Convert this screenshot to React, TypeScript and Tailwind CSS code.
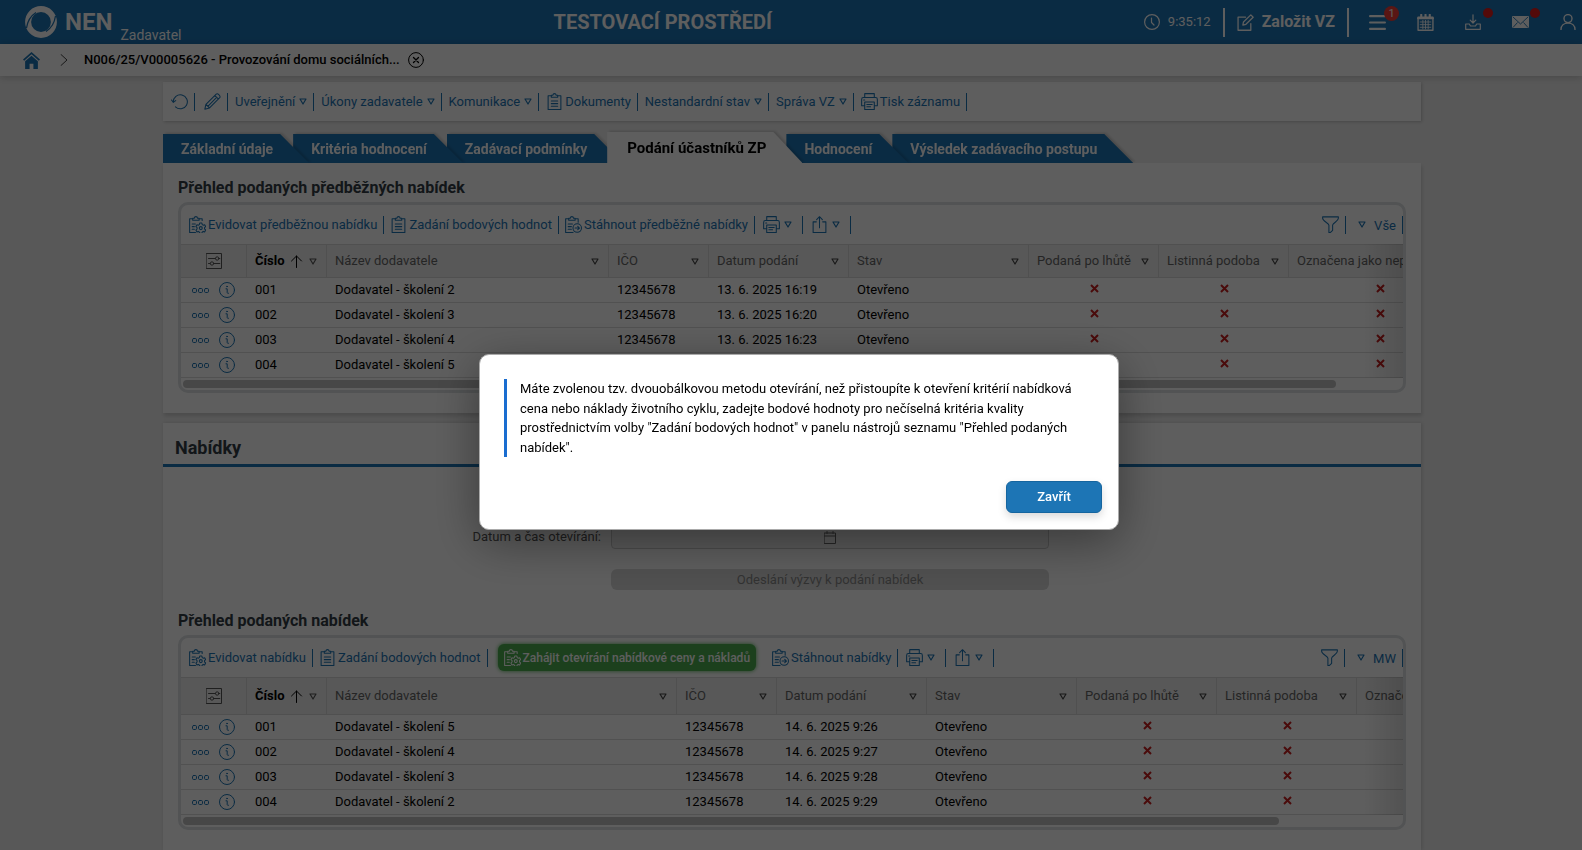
import { ReactNode, useState } from "react"

type IconProps = { className?: string }

const Svg = ({ className = "size-4", children, viewBox = "0 0 16 16" }: IconProps & { children: ReactNode, viewBox?: string }) => (
    <svg className={`${className} shrink-0`} viewBox={viewBox} fill="none" stroke="currentColor" strokeWidth="1" strokeLinecap="round" strokeLinejoin="round" aria-hidden="true">
        {children}
    </svg>
)

const Triangle = ({ className = "w-2 h-[7px]" }: IconProps) => (
    <Svg className={className} viewBox="0 0 8 7">
        <path d="M1 1h6L4 6z" strokeWidth="1.2" />
    </Svg>
)

const LogoIcon = () => (
    <svg className="size-8 shrink-0" viewBox="0 0 32 32" fill="none" aria-hidden="true">
        <circle cx="16" cy="16" r="12.900" stroke="currentColor" strokeWidth="6" />
        <path d="M1.500 22C2.500 15 5.500 10 11 6.500" stroke="#1d75b5" strokeWidth="1.300" />
        <path d="M30.500 10C29.500 17 26.500 22 21 25.500" stroke="#1d75b5" strokeWidth="1.300" />
    </svg>
)

const ClockIcon = () => (
    <Svg>
        <circle cx="8" cy="8" r="7.400" strokeWidth="1.200" />
        <path d="M7.500 4v4.500L10 11" strokeWidth="1.200" />
    </Svg>
)

const ComposeIcon = () => (
    <Svg className="size-[17px]">
        <path d="M8 3H1v12.300h12V9M5.500 10.500l.6-3L13 .8l2.200 2.200-6.800 6.700z" strokeWidth="1.200" />
    </Svg>
)

const MenuIcon = () => (
    <Svg className="size-[17px]">
        <path d="M1 2h14M1 8h14M1 14h14" strokeWidth="2" />
    </Svg>
)

const CalendarIcon = () => (
    <Svg className="size-[17px]">
        <path d="M1 3h14v12.300H1z" strokeWidth="1.300" />
        <path d="M1 4h14M4 .8v3M12 .8v3M8 .8v3" strokeWidth="2" />
        <path d="M3 7.500h10M3 10h10M3 12.500h10M5.500 6v8M8 6v8M10.500 6v8" strokeWidth=".8" />
    </Svg>
)

const DownloadIcon = () => (
    <Svg>
        <path d="M8 .8v8M5.200 6.200L8 9l2.800-2.800M.7 10v5.300h14.600V10h-3.600l-1.200 2h-5l-1.200-2z" strokeWidth="1.200" />
    </Svg>
)

const MailIcon = () => (
    <svg className="w-[17px] h-3 shrink-0" viewBox="0 0 17 12" aria-hidden="true">
        <rect width="17" height="12" rx="1" fill="currentColor" />
        <path d="M1 1l7.500 7L16 1M1 11.500l4.500-5M16 11.500l-4.500-5" fill="none" stroke="#1d75b5" strokeWidth=".9" />
    </svg>
)

const UserIcon = () => (
    <Svg>
        <circle cx="8" cy="4.600" r="4" strokeWidth="1.400" />
        <path d="M1 15.600c0-4 3-6.500 7-6.500s7 2.500 7 6.500" strokeWidth="1.400" />
    </Svg>
)

const HomeIcon = () => (
    <svg className="size-[17px] shrink-0" viewBox="0 0 16 16" fill="currentColor" aria-hidden="true">
        <path d="M8 0l8 7-1.100 1.300L8 2.200 1.100 8.300 0 7z" />
        <path d="M8 3.500l6 5.200V16H9.800v-5H6.200v5H2V8.700z" />
    </svg>
)

const RefreshIcon = () => (
    <Svg className="size-[17px]">
        <path d="M2.200 8.500A6.600 6.600 0 1 1 4.200 13M.5 6.600l1.700 2.200 2.200-1.600" />
    </Svg>
)

const PencilIcon = () => (
    <Svg className="size-[17px]">
        <path d="M.8 15.200l1-4.400L11.500 1.100c1.400-1.200 4.500 1.700 3.300 3.300L5.200 14.100zM1.800 10.800l3.400 3.300M10.300 2.400l3.300 3.300M3.600 12.500l7.600-7.600" />
    </Svg>
)

const ClipboardIcon = () => (
    <Svg className="size-[17px]">
        <path d="M5 2.500H2v13h12v-13h-3M5 4V2.200h1.400C6.600 1 7.200.6 8 .6s1.400.4 1.600 1.600H11V4zM5 7.500h6M5 10h6M5 12.500h6" />
    </Svg>
)

const ClipboardGearIcon = () => (
    <Svg className="size-[17px]">
        <path d="M3.500 2.500H.6v13h5.500M9.500 2.500h2.900v1.800M3.500 4V2.200h1.400C5.100 1 5.700.6 6.500.6s1.400.4 1.600 1.600h1.400V4zM3 7.500h3M3 10h2M3 12.500h2" />
        <path d="M10.100 6.600h2l.4 1.500 1 .6 1.200-.500 1 1.800-1.100 1v1.200l1.100 1-1 1.800-1.200-.500-1 .6-.4 1.200h-2l-.4-1.200-1-.6-1.200.5-1-1.800 1.100-1v-1.200l-1.100-1 1-1.800 1.200.5 1-.6z" />
        <circle cx="11.100" cy="11.400" r="1.400" />
    </Svg>
)

const ClipboardArrowIcon = () => (
    <Svg className="size-[17px]">
        <path d="M3.500 2.500H.6v13h7M9.500 2.500h2.900v3.300M3.500 4V2.200h1.400C5.100 1 5.700.6 6.500.6s1.400.4 1.600 1.600h1.400V4zM3 7.500h4M3 10h3M3 12.500h3" />
        <circle cx="11.500" cy="11.300" r="4" />
        <path d="M9.500 11.300h4M12 9.700l1.600 1.600L12 12.900" />
    </Svg>
)

const PrinterIcon = () => (
    <Svg className="size-[17px]">
        <path d="M3.500 4V.6h9V4M3.500 12H.6V6c0-1 .6-1.800 1.600-1.800h11.600c1 0 1.600.8 1.600 1.800v6h-2.900M2.500 6.500h1M3.500 8.500h9v7h-9zM5.500 10.800h5M5.500 13h3.500" />
    </Svg>
)

const ShareIcon = () => (
    <Svg className="size-[17px]">
        <path d="M5 5.500H2v10h12v-10h-3M8 11V.8M5.300 3.400L8 .7l2.700 2.700" />
    </Svg>
)

const FilterIcon = () => (
    <Svg className="size-[17px]">
        <path d="M.6.8h14.800v1.400c0 3-5 4-5.400 6.300v5l-2 2H6.500v-7C6 6.200.6 5.200.6 2.200z" />
    </Svg>
)

const SettingsIcon = () => (
    <Svg>
        <path d="M.5.500h15v15H.5zM2.500 5.500h7M13 5.500h.8M2.500 10.500H4M8 10.500h5.800" />
        <circle cx="11.200" cy="5.500" r="1.700" />
        <circle cx="6" cy="10.500" r="1.700" />
    </Svg>
)

const SortIcon = () => (
    <Svg className="w-3 h-[13px]" viewBox="0 0 12 13">
        <path d="M5.500 12.500V1M.5 6l5-5 5 5" />
    </Svg>
)

const DotsIcon = () => (
    <Svg className="w-[17px] h-[5px]" viewBox="0 0 17 5">
        <rect x=".5" y=".5" width="4" height="4" rx="1.200" />
        <rect x="6.500" y=".5" width="4" height="4" rx="1.200" />
        <rect x="12.500" y=".5" width="4" height="4" rx="1.200" />
    </Svg>
)

const InfoIcon = () => (
    <Svg>
        <circle cx="8" cy="8" r="7.500" />
        <path d="M7 6.800h1.200v3.700c0 .7.4 1 1.300.8" />
        <circle cx="8" cy="4.500" r=".4" />
    </Svg>
)

const CrossIcon = () => (
    <svg className="inline-block size-[9px] -translate-y-0.5" viewBox="0 0 9 9" role="img" aria-label="Ne">
        <path d="M1 1l7 7M8 1L1 8" stroke="#c81e1e" strokeWidth="2" />
    </svg>
)

type ToolProps = {
    icon?: ReactNode
    label?: string
    title?: string
    menu?: boolean
}

const Tool = ({ icon, label, title, menu }: ToolProps) => (
    <div className="flex items-center">
        <button type="button" aria-label={title} className={`flex items-center whitespace-nowrap cursor-pointer ${icon && label ? "gap-0.5" : "gap-1"} ${label ? "px-1.5" : menu ? "pl-2 pr-2.5" : "pl-2 pr-1.5"}`}>
            {icon}
            {label && <span>{label}</span>}
            {menu && <Triangle />}
        </button>
        <span className="w-px h-[18px] bg-[#1d75b5]" />
    </div>
)

const tabs = [
    "Základní údaje",
    "Kritéria hodnocení",
    "Zadávací podmínky",
    "Podání účastníků ZP",
    "Hodnocení",
    "Výsledek zadávacího postupu",
]

const tabLayers = ["z-5", "z-4", "z-3", "z-6", "z-2", "z-1"]

type Bid = {
    id: string
    supplier: string
    ico: string
    date: string
    state: string
}

const preliminaryBids: Bid[] = [
    { id: "001", supplier: "Dodavatel - školení 2", ico: "12345678", date: "13. 6. 2025 16:19", state: "Otevřeno" },
    { id: "002", supplier: "Dodavatel - školení 3", ico: "12345678", date: "13. 6. 2025 16:20", state: "Otevřeno" },
    { id: "003", supplier: "Dodavatel - školení 4", ico: "12345678", date: "13. 6. 2025 16:23", state: "Otevřeno" },
    { id: "004", supplier: "Dodavatel - školení 5", ico: "12345678", date: "13. 6. 2025 16:24", state: "Otevřeno" },
]

const bids: Bid[] = [
    { id: "001", supplier: "Dodavatel - školení 5", ico: "12345678", date: "14. 6. 2025 9:26", state: "Otevřeno" },
    { id: "002", supplier: "Dodavatel - školení 4", ico: "12345678", date: "14. 6. 2025 9:27", state: "Otevřeno" },
    { id: "003", supplier: "Dodavatel - školení 3", ico: "12345678", date: "14. 6. 2025 9:28", state: "Otevřeno" },
    { id: "004", supplier: "Dodavatel - školení 2", ico: "12345678", date: "14. 6. 2025 9:29", state: "Otevřeno" },
]

const columns = ["Název dodavatele", "IČO", "Datum podání", "Stav", "Podaná po lhůtě", "Listinná podoba", "Označena jako neplatná"]

type BidGridProps = {
    rows: Bid[]
    widths: number[]
    headClass: string
    tools: ReactNode
    view: string
}

const BidGrid = ({ rows, widths, headClass, tools, view }: BidGridProps) => {
    const total = widths.reduce((sum, width) => sum + width, 0)

    return (
        <div className="overflow-hidden rounded-[10px] border-3 border-[#dde1e3]">
            <div className="flex items-center h-[39px] pl-0.5 text-[#1d75b5]">
                {tools}
                <div className="flex items-center ml-auto">
                    <Tool icon={<FilterIcon />} title="Filtr" />
                    <button type="button" className="flex items-center gap-2 pl-3 pr-1.5 cursor-pointer">
                        <Triangle />
                        <span className="pt-0.5">{view}</span>
                    </button>
                    <span className="w-px h-[18px] bg-[#1d75b5]" />
                </div>
            </div>
            <div className="relative overflow-hidden">
                <table className="table-fixed border-separate border-spacing-0" style={{ width: total }}>
                    <colgroup>
                        {widths.map((width, i) => <col key={i} style={{ width }} />)}
                    </colgroup>
                    <thead>
                        <tr className={`${headClass} bg-[#efefef] text-[#666] *:border-y *:border-r *:border-[#d8d8d8]`}>
                            <th>
                                <button type="button" aria-label="Nastavení sloupců" className="block mx-auto text-[#555] cursor-pointer">
                                    <SettingsIcon />
                                </button>
                            </th>
                            <th className="pl-2 pr-[9px] text-left font-bold text-black">
                                <span className="flex items-center justify-between">
                                    Číslo
                                    <SortIcon />
                                    <Triangle className="w-2 h-[7px] text-[#555]" />
                                </span>
                            </th>
                            {columns.map(column => (
                                <th key={column} className="pl-2 pr-[9px] text-left font-normal whitespace-nowrap overflow-hidden">
                                    <span className="flex items-center justify-between">
                                        {column}
                                        <Triangle className="w-2 h-[7px] text-[#444]" />
                                    </span>
                                </th>
                            ))}
                        </tr>
                    </thead>
                    <tbody>
                        {rows.map(row => (
                            <tr key={row.id} className="h-[25px] text-black whitespace-nowrap *:border-b *:border-[#dcdcdc]">
                                <td>
                                    <div className="flex items-center gap-2.5 pl-[11px] text-[#1d75b5]">
                                        <button type="button" aria-label="Akce" className="cursor-pointer"><DotsIcon /></button>
                                        <button type="button" aria-label="Detail" className="cursor-pointer"><InfoIcon /></button>
                                    </div>
                                </td>
                                <td className="px-2">{row.id}</td>
                                <td className="px-2">{row.supplier}</td>
                                <td className="px-2">{row.ico}</td>
                                <td className="px-2">{row.date}</td>
                                <td className="px-2">{row.state}</td>
                                <td className="text-center"><CrossIcon /></td>
                                <td className="text-center"><CrossIcon /></td>
                                <td className="text-center"><CrossIcon /></td>
                            </tr>
                        ))}
                    </tbody>
                </table>
                <div className="absolute inset-y-0 right-0 w-10 bg-linear-to-r from-transparent to-black/12" />
            </div>
            <div className="p-0.5">
                <div className="h-2 rounded-full bg-[#c1c1c1]" style={{ width: `${(1221 / total) * 100}%` }} />
            </div>
        </div>
    )
}

const TopBar = () => (
    <header className="flex items-center justify-between h-11 bg-[#1d75b5] text-white">
        <div className="flex items-center h-full pl-[25px]">
            <LogoIcon />
            <span className="ml-2 text-2xl font-bold">NEN</span>
            <span className="ml-2 self-end text-sm leading-[18px]">Zadavatel</span>
        </div>
        <div className="text-xl font-bold">TESTOVACÍ PROSTŘEDÍ</div>
        <div className="flex items-center justify-end pr-1.5">
            <div className="flex items-center gap-2 pr-3">
                <ClockIcon />
                <span>9:35:12</span>
            </div>
            <button type="button" className="flex items-center gap-2 h-[29px] px-3 border-x-2 border-white text-base font-bold cursor-pointer">
                <ComposeIcon />
                Založit VZ
            </button>
            <div className="flex items-center gap-[31px] pl-5">
                <button type="button" aria-label="Menu" className="relative cursor-pointer">
                    <MenuIcon />
                    <span className="absolute -top-2 left-[15px] size-[15px] rounded-full bg-[#f03c36] text-[11px] leading-[15px] text-center">1</span>
                </button>
                <button type="button" aria-label="Kalendář" className="cursor-pointer"><CalendarIcon /></button>
                <button type="button" aria-label="Stažené soubory" className="relative cursor-pointer">
                    <DownloadIcon />
                    <span className="absolute -top-1.5 left-[18px] size-2.5 rounded-full bg-[#e01b1b]" />
                </button>
                <button type="button" aria-label="Zprávy" className="relative cursor-pointer">
                    <MailIcon />
                    <span className="absolute -top-2 left-[18px] size-2.5 rounded-full bg-[#e01b1b]" />
                </button>
                <button type="button" aria-label="Uživatel" className="cursor-pointer"><UserIcon /></button>
            </div>
        </div>
    </header>
)

const Breadcrumb = () => (
    <nav className="relative z-10 flex items-center h-8 pl-[23px] bg-white shadow-[0_1px_8px_rgba(0,0,0,0.2)]">
        <a href="#" aria-label="Domů" className="text-[#1d75b5]"><HomeIcon /></a>
        <Svg className="w-2 h-3 ml-5 text-[#444]" viewBox="0 0 8 12">
            <path d="M1 .500L7 6l-6 5.500" />
        </Svg>
        <a href="#" className="ml-4 font-medium text-black">N006/25/V00005626 - Provozování domu sociálních...</a>
        <button type="button" aria-label="Zavřít záznam" className="ml-2 text-black cursor-pointer">
            <Svg>
                <circle cx="8" cy="8" r="7.400" />
                <path d="M5.500 5.500l5 5M10.500 5.500l-5 5" strokeWidth="1.300" />
            </Svg>
        </button>
    </nav>
)

const App = () => {
    const [activeTab, setActiveTab] = useState(3)
    const [dialogOpen, setDialogOpen] = useState(true)

    return (
        <div className="flex flex-col h-screen overflow-hidden bg-[#efefef] font-[Roboto,'Liberation_Sans',sans-serif] text-[13px] leading-4 text-[#333]">
            <TopBar />
            <Breadcrumb />

            <main className="flex flex-col flex-1 pl-[163px] pr-[161px] pt-1.5">
                <div className="flex items-center gap-px h-[39px] bg-white text-[#1d75b5] shadow-[1px_1px_3px_rgba(0,0,0,0.2)]">
                    <Tool icon={<RefreshIcon />} title="Obnovit" />
                    <Tool icon={<PencilIcon />} title="Upravit" />
                    <Tool label="Uveřejnění" menu />
                    <Tool label="Úkony zadavatele" menu />
                    <Tool label="Komunikace" menu />
                    <Tool icon={<ClipboardIcon />} label="Dokumenty" />
                    <Tool label="Nestandardní stav" menu />
                    <Tool label="Správa VZ" menu />
                    <Tool icon={<PrinterIcon />} label="Tisk záznamu" />
                </div>

                <ul className="flex items-end h-[42px] shrink-0">
                    {tabs.map((tab, i) => (
                        <li key={tab} className={`relative -mr-4 drop-shadow-[2px_-1px_1px_rgba(0,0,0,0.15)] ${tabLayers[i]}`}>
                            <button
                                type="button"
                                onClick={() => setActiveTab(i)}
                                className={`block pr-9 font-bold whitespace-nowrap cursor-pointer [clip-path:polygon(0_0,calc(100%-29px)_0,100%_100%,0_100%)] ${i === activeTab ? "h-[31px] pl-5 bg-white text-[15px] text-black" : "h-[29px] pl-[18px] bg-[#1d75b5] text-sm text-white"}`}
                            >
                                {tab}
                            </button>
                        </li>
                    ))}
                </ul>

                <section className="relative z-10 px-[15px] pt-[15px] pb-5 bg-white shadow-[1px_3px_4px_rgba(0,0,0,0.15)]">
                    <h2 className="mb-1 text-base leading-5 font-bold text-[#333c45]">Přehled podaných předběžných nabídek</h2>
                    <BidGrid
                        rows={preliminaryBids}
                        widths={[66, 80, 282, 100, 140, 180, 130, 130, 182]}
                        headClass="h-[34px]"
                        view="Vše"
                        tools={
                            <>
                                <Tool icon={<ClipboardGearIcon />} label="Evidovat předběžnou nabídku" />
                                <Tool icon={<ClipboardIcon />} label="Zadání bodových hodnot" />
                                <Tool icon={<ClipboardArrowIcon />} label="Stáhnout předběžné nabídky" />
                                <Tool icon={<PrinterIcon />} title="Tisk" menu />
                                <Tool icon={<ShareIcon />} title="Export" menu />
                            </>
                        }
                    />
                </section>

                <section className="flex-1 mt-2.5 bg-white shadow-[1px_0_4px_rgba(0,0,0,0.15)]">
                    <h1 className="flex items-center h-11 pl-3 pt-2 border-b-3 border-[#1d75b5] text-lg font-bold text-[#333c45]">Nabídky</h1>
                    <div className="grid grid-cols-[438px_438px] gap-x-2.5 gap-y-5 pt-14">
                        <label htmlFor="opening" className="h-[26px] text-right leading-7 text-[#555]">Datum a čas otevírání:</label>
                        <div className="relative">
                            <input id="opening" type="text" disabled className="block w-full h-[26px] rounded border border-[#ccc] bg-[#f4f4f4]" />
                            <Svg className="absolute left-[213px] bottom-[5px] w-3 h-[13px] text-[#666]" viewBox="0 0 12 13">
                                <path d="M.5 2h11v10.500H.5zM.5 5h11M3 .500v2M9 .500v2" />
                            </Svg>
                        </div>
                        <button type="button" disabled className="col-start-2 h-[21px] rounded-md bg-[#d9d9d9] text-[#888]">Odeslání výzvy k podání nabídek</button>
                    </div>
                    <div className="px-[15px] pt-[21px]">
                        <h2 className="mb-1 text-base leading-5 font-bold text-[#333c45]">Přehled podaných nabídek</h2>
                        <BidGrid
                            rows={bids}
                            widths={[66, 80, 350, 100, 150, 150, 140, 140, 181]}
                            headClass="h-[38px]"
                            view="MW"
                            tools={
                                <>
                                    <Tool icon={<ClipboardGearIcon />} label="Evidovat nabídku" />
                                    <Tool icon={<ClipboardIcon />} label="Zadání bodových hodnot" />
                                    <button type="button" className="flex items-center gap-0.5 h-[27px] mx-2.5 px-1.5 rounded-md bg-[#4caf50] text-xs font-medium text-white whitespace-nowrap shadow-[0_0_4px_#4caf50] cursor-pointer">
                                        <ClipboardGearIcon />
                                        Zahájit otevírání nabídkové ceny a nákladů
                                    </button>
                                    <Tool icon={<ClipboardArrowIcon />} label="Stáhnout nabídky" />
                                    <Tool icon={<PrinterIcon />} title="Tisk" menu />
                                    <Tool icon={<ShareIcon />} title="Export" menu />
                                </>
                            }
                        />
                    </div>
                </section>
            </main>

            {dialogOpen &&
                <div className="fixed inset-0 z-20 flex items-center justify-center pl-4 pt-[34px] bg-black/63">
                    <div role="dialog" aria-modal="true" aria-describedby="dialog-text" className="w-[640px] p-4 border border-[#aaa] rounded-[10px] bg-white text-black shadow-[0_12px_48px_rgba(0,0,0,0.4)]">
                        <p id="dialog-text" className="m-2 pl-[13px] border-l-3 border-[#1a6dd0] leading-normal">
                            Máte zvolenou tzv. dvouobálkovou metodu otevírání, než přistoupíte k otevření kritérií nabídková cena nebo náklady životního cyklu, zadejte bodové hodnoty pro nečíselná kritéria kvality prostřednictvím volby "Zadání bodových hodnot" v panelu nástrojů seznamu "Přehled podaných nabídek".
                        </p>
                        <div className="flex justify-end mt-6">
                            <button type="button" onClick={() => setDialogOpen(false)} className="w-24 h-8 rounded-md border border-[#15659f] bg-[#1d75b5] font-medium text-white shadow-[0_4px_8px_rgba(0,0,0,0.15)] cursor-pointer">
                                Zavřít
                            </button>
                        </div>
                    </div>
                </div>
            }
        </div>
    )
}

export default App
